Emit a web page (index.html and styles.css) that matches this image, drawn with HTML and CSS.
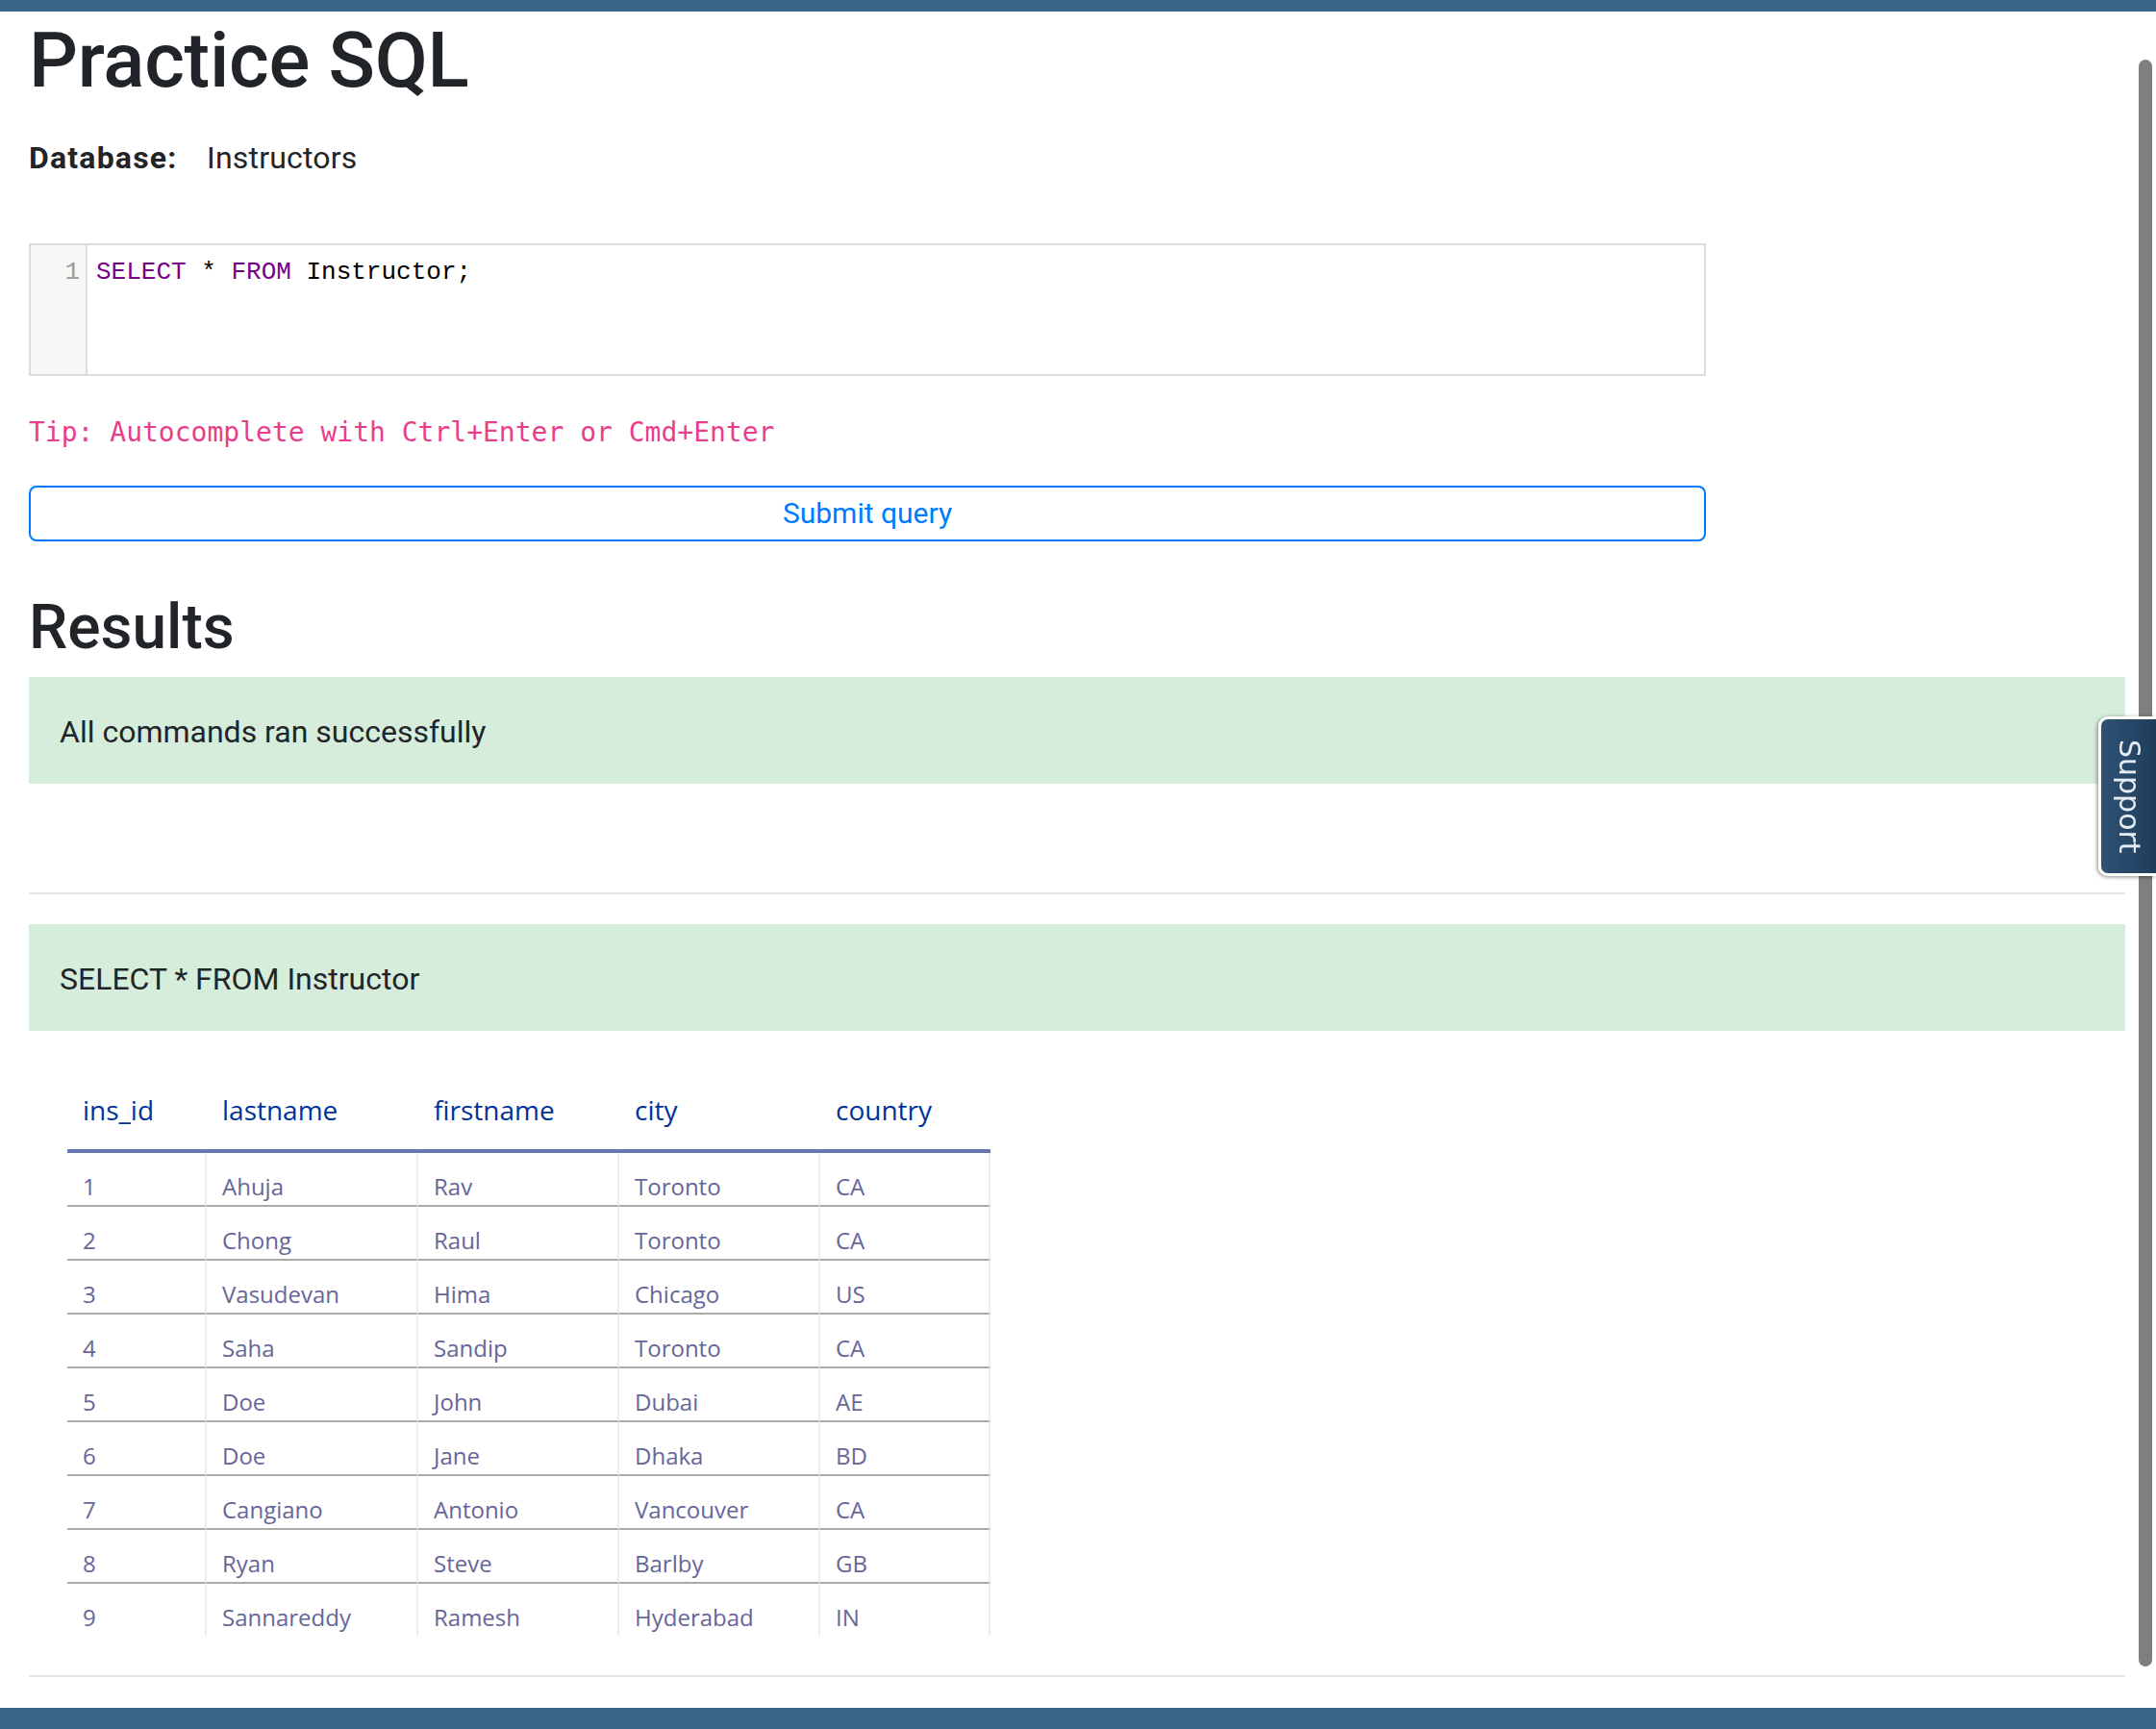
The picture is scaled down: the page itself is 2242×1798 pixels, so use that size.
FILE: index.html
```html
<!DOCTYPE html>
<html lang="en">
<head>
<meta charset="utf-8">
<title>Practice SQL</title>
<link rel="stylesheet" href="styles.css">
</head>
<body>
<div class="topbar"></div>
<main class="page">
  <h1 class="title">Practice SQL</h1>
  <div class="db"><span class="db-label">Database:</span><span class="db-name">Instructors</span></div>
  <div class="editor">
    <div class="gutter"><div class="lineno">1</div></div>
    <div class="code"><span class="kw">SELECT</span> * <span class="kw">FROM</span> Instructor;</div>
  </div>
  <p class="tip"><code>Tip: Autocomplete with Ctrl+Enter or Cmd+Enter</code></p>
  <button class="submit" type="button">Submit query</button>
  <h2 class="results-title">Results</h2>
  <div class="alert">All commands ran successfully</div>
  <hr class="sep sep-mid">
  <div class="alert">SELECT * FROM Instructor</div>
  <table class="grid">
    <colgroup><col class="c1"><col class="c2"><col class="c3"><col class="c4"><col class="c5"></colgroup>
    <thead>
      <tr><th>ins_id</th><th>lastname</th><th>firstname</th><th>city</th><th>country</th></tr>
    </thead>
    <tbody>
      <tr><td>1</td><td>Ahuja</td><td>Rav</td><td>Toronto</td><td>CA</td></tr>
      <tr><td>2</td><td>Chong</td><td>Raul</td><td>Toronto</td><td>CA</td></tr>
      <tr><td>3</td><td>Vasudevan</td><td>Hima</td><td>Chicago</td><td>US</td></tr>
      <tr><td>4</td><td>Saha</td><td>Sandip</td><td>Toronto</td><td>CA</td></tr>
      <tr><td>5</td><td>Doe</td><td>John</td><td>Dubai</td><td>AE</td></tr>
      <tr><td>6</td><td>Doe</td><td>Jane</td><td>Dhaka</td><td>BD</td></tr>
      <tr><td>7</td><td>Cangiano</td><td>Antonio</td><td>Vancouver</td><td>CA</td></tr>
      <tr><td>8</td><td>Ryan</td><td>Steve</td><td>Barlby</td><td>GB</td></tr>
      <tr><td>9</td><td>Sannareddy</td><td>Ramesh</td><td>Hyderabad</td><td>IN</td></tr>
    </tbody>
  </table>
  <hr class="sep sep-end">
</main>
<div class="footer"></div>
<div class="scroll-thumb"></div>
<a class="support">Support</a>
</body>
</html>
```
FILE: styles.css
```css
* { box-sizing: border-box; }

html, body {
  margin: 0;
  height: 1798px;
  overflow: hidden;
  background: #fff;
}

body {
  font-family: Roboto, "Liberation Sans", Arial, sans-serif;
  color: #212529;
  display: flex;
  flex-direction: column;
}

.topbar {
  flex: none;
  height: 12px;
  background: #386689;
}

.footer {
  flex: none;
  height: 22px;
  background: #386689;
}

.page {
  flex: 1;
  padding: 0 32px 0 30px;
}

.title {
  margin: 3px 0 0;
  font-size: 80px;
  line-height: 96px;
  font-weight: 500;
  letter-spacing: -0.3px;
}

.db {
  margin-top: 29px;
  font-size: 32px;
  line-height: 48px;
}

.db-label {
  display: inline-block;
  width: 185px;
  font-weight: 700;
  letter-spacing: 1.2px;
}

.db-name { letter-spacing: 0.2px; }

.editor {
  margin-top: 65px;
  width: 80%;
  height: 138px;
  border: 2px solid #ddd;
  display: flex;
  background: #fff;
}

.gutter {
  width: 59px;
  flex: none;
  background: #f7f7f7;
  border-right: 2px solid #ddd;
  padding: 13px 6px 0 0;
}

.lineno {
  text-align: right;
  font-family: "Liberation Mono", "Courier New", monospace;
  font-size: 26px;
  line-height: 30px;
  color: #999;
}

.code {
  padding: 13px 0 0 9px;
  font-family: "Liberation Mono", "Courier New", monospace;
  font-size: 26px;
  line-height: 30px;
  color: #000;
  white-space: pre;
}

.kw { color: #708; }

.tip {
  margin: 38px 0 0;
  height: 42px;
}

.tip code {
  display: block;
  font-family: "DejaVu Sans Mono", Menlo, monospace;
  font-size: 28px;
  line-height: 42px;
  color: #e83e8c;
}

.submit {
  display: block;
  margin-top: 34px;
  width: 80%;
  height: 58px;
  padding: 6px;
  border: 2px solid #007bff;
  border-radius: 8px;
  background: #fff;
  color: #007bff;
  font-family: Roboto, "Liberation Sans", Arial, sans-serif;
  font-size: 30px;
  line-height: 42px;
}

.results-title {
  margin: 51px 0 0;
  font-size: 64px;
  line-height: 77px;
  font-weight: 500;
}

.alert {
  margin-top: 13px;
  padding: 33px 32px 30px;
  background: #d6eddc;
  font-size: 32px;
  line-height: 48px;
  color: #212529;
}

.sep {
  border: 0;
  height: 2px;
  background: #e6e6e6;
  margin: 0;
}

.sep-mid { margin: 113px 0 31px; }
.sep-mid + .alert { margin-top: 0; }

.sep-end { margin-top: 41px; }

.grid {
  margin: 41px 0 0 40px;
  width: 960px;
  table-layout: fixed;
  border-collapse: separate;
  border-spacing: 0;
  text-align: left;
  font-family: "Open Sans", "DejaVu Sans", sans-serif;
}

.c1 { width: 145px; }
.c2 { width: 220px; }
.c3 { width: 209px; }
.c4 { width: 209px; }
.c5 { width: 177px; }

.grid th {
  padding: 22px 16px 22px;
  font-size: 28px;
  line-height: 38px;
  font-weight: 400;
  color: #039;
  border-bottom: 4px solid #6678b1;
}

.grid td {
  padding: 19px 16px 3px;
  font-size: 24px;
  line-height: 32px;
  color: #669;
  border-bottom: 2px solid #aaa;
  border-right: 2px solid #eee;
}

.grid tbody tr:last-child td { border-bottom: 0; }

.scroll-thumb {
  position: fixed;
  right: 4px;
  top: 62px;
  width: 14px;
  height: 1671px;
  background: #7f7f7f;
  border-radius: 7px;
}

.support {
  position: fixed;
  right: 0;
  top: 745px;
  width: 60px;
  height: 166px;
  display: flex;
  align-items: center;
  justify-content: center;
  writing-mode: vertical-rl;
  background: linear-gradient(to right, #2f5274, #1e3d5b);
  border: 3px solid #fff;
  border-right: 0;
  border-radius: 10px 0 0 10px;
  box-shadow: -1px 1px 4px rgba(0, 0, 0, 0.45);
  color: #e6ecf2;
  font-family: "DejaVu Sans", sans-serif;
  font-size: 30px;
  line-height: 1;
}
```
